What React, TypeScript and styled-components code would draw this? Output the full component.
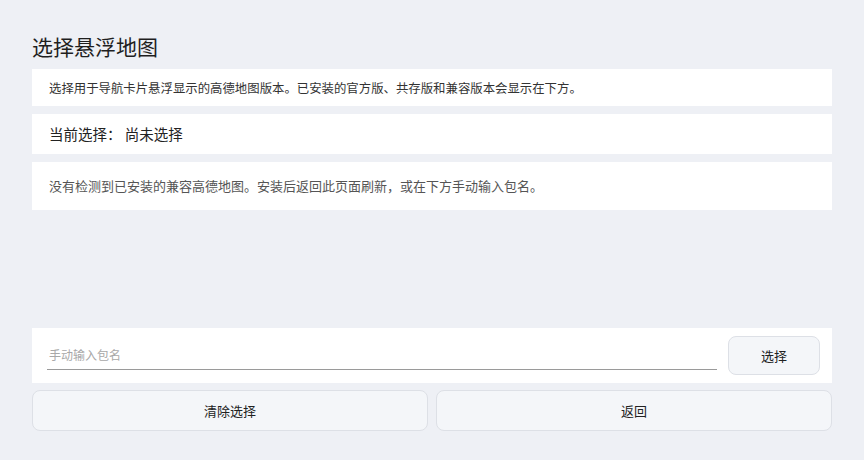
import React from 'react';
import styled, {createGlobalStyle} from 'styled-components';

const GlobalStyle = createGlobalStyle`
  html, body {
    margin: 0;
    padding: 0;
    background: #eef0f5;
  }
  body {
    font-family: "Noto Sans CJK SC", "Noto Sans", sans-serif;
    color: #222;
  }
  * { box-sizing: border-box; }
`;

const Page = styled.div`
  height: 460px;
  padding: 32px 32px 29px;
  display: flex;
  flex-direction: column;
  background: #eef0f5;
`;

const Title = styled.h1`
  margin: 0 0 9px;
  font-size: 21px;
  line-height: 28px;
  font-weight: 400;
  color: #1f1f1f;
`;

const Stack = styled.div`
  display: flex;
  flex-direction: column;
  gap: 8px;
`;

const Card = styled.div<{ $h: number }>`
  background: #fff;
  height: ${p => p.$h}px;
  padding: 0 17px;
  display: flex;
  align-items: center;
`;

const Note = styled.p<{ $size: number; $muted?: boolean }>`
  margin: 0;
  font-size: ${p => p.$size}px;
  line-height: 18px;
  color: ${p => (p.$muted ? '#555' : '#333')};
`;

const Current = styled.p`
  margin: 0;
  font-size: 14.5px;
  line-height: 20px;
  color: #222;
`;

const Spacer = styled.div`
  flex: 1;
`;

const InputCard = styled.div`
  background: #fff;
  height: 55px;
  padding: 8px 12px 0 15px;
  display: flex;
  align-items: flex-start;
  gap: 11px;
`;

const PackageInput = styled.input`
  flex: 1;
  height: 34px;
  border: none;
  border-bottom: 1px solid #9a9a9a;
  outline: none;
  padding: 4px 2px 0;
  font-family: inherit;
  font-size: 12px;
  color: #222;
  background: transparent;

  &::placeholder {
    color: #a8a8a8;
  }
`;

const Button = styled.button<{ $w?: number; $h: number }>`
  ${p => (p.$w ? `width: ${p.$w}px;` : 'flex: 1;')}
  height: ${p => p.$h}px;
  border: 1px solid #dde0e6;
  border-radius: 8px;
  background: #f4f6f9;
  font-family: inherit;
  font-size: 13px;
  color: #222;
  cursor: pointer;
`;

const ButtonRow = styled.div`
  margin-top: 7px;
  display: flex;
  gap: 8px;
`;

export default function App() {
  return (
    <Page>
      <GlobalStyle />
      <Title>选择悬浮地图</Title>
      <Stack>
        <Card $h={37}>
          <Note $size={12.4}>选择用于导航卡片悬浮显示的高德地图版本。已安装的官方版、共存版和兼容版本会显示在下方。</Note>
        </Card>
        <Card $h={40}>
          <Current>当前选择： 尚未选择</Current>
        </Card>
        <Card $h={48}>
          <Note $size={13} $muted>没有检测到已安装的兼容高德地图。安装后返回此页面刷新，或在下方手动输入包名。</Note>
        </Card>
      </Stack>
      <Spacer />
      <InputCard>
        <PackageInput placeholder="手动输入包名" />
        <Button $w={92} $h={39}>选择</Button>
      </InputCard>
      <ButtonRow>
        <Button $h={41}>清除选择</Button>
        <Button $h={41}>返回</Button>
      </ButtonRow>
    </Page>
  );
}
